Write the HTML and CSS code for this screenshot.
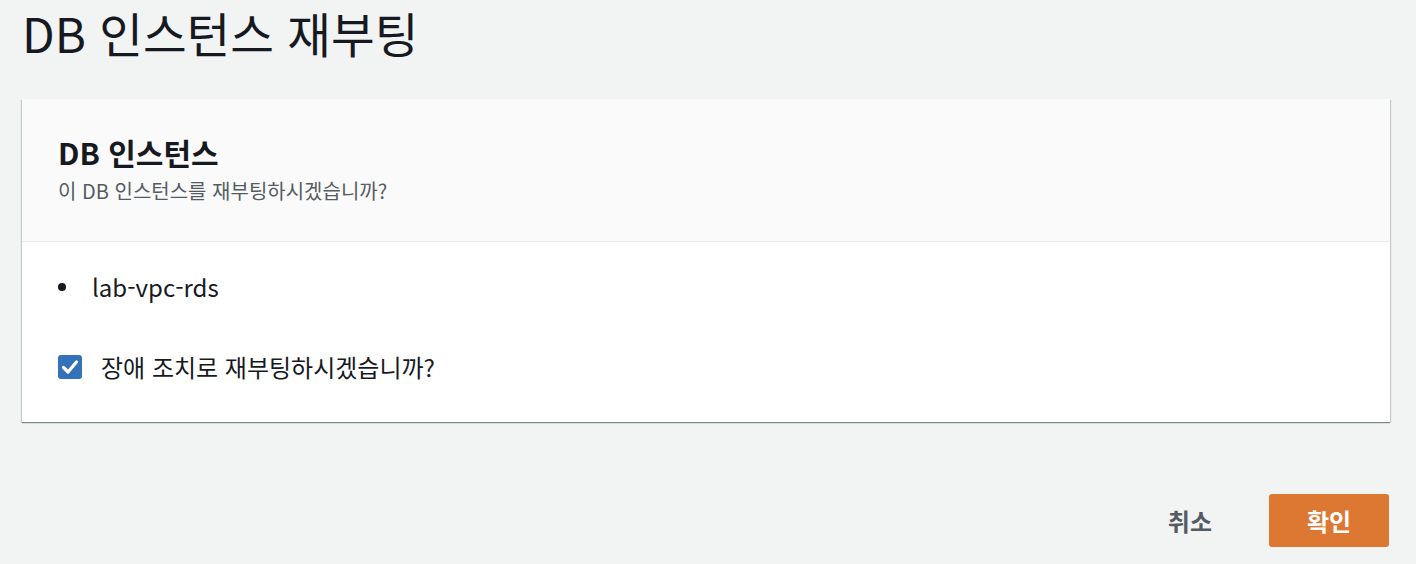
FILE: index.html
```html
<!DOCTYPE html>
<html lang="ko">
<head>
<meta charset="utf-8">
<title>DB 인스턴스 재부팅</title>
<link rel="stylesheet" href="styles.css">
</head>
<body>
<div class="page">
  <h1 class="page-title">DB 인스턴스 재부팅</h1>
  <section class="card">
    <header class="card-header">
      <h2 class="card-title">DB 인스턴스</h2>
      <p class="card-desc">이 DB 인스턴스를 재부팅하시겠습니까?</p>
    </header>
    <div class="card-body">
      <ul class="instances">
        <li class="instance"><span class="dot"></span><span>lab-vpc-rds</span></li>
      </ul>
      <label class="check-row">
        <span class="checkbox">
          <svg width="24" height="24" viewBox="0 0 24 24"><path d="M5.5 12.5l4.5 4.5 8.5-10" fill="none" stroke="#fff" stroke-width="3.2" stroke-linecap="round" stroke-linejoin="round"/></svg>
        </span>
        <span class="check-label">장애 조치로 재부팅하시겠습니까?</span>
      </label>
    </div>
  </section>
  <div class="actions">
    <button class="btn btn-link">취소</button>
    <button class="btn btn-primary">확인</button>
  </div>
</div>
</body>
</html>
```
FILE: styles.css
```css
* { box-sizing: border-box; }
html, body { margin: 0; padding: 0; }
body {
  background: #f2f3f3;
  font-family: "Noto Sans CJK KR", "Noto Sans", sans-serif;
  color: #16191f;
}
.page {
  padding: 0 26px 0 22px;
}
.page-title {
  margin: 0;
  font-size: 47.5px;
  font-weight: 400;
  line-height: 66px;
  color: #16191f;
}
.card {
  margin-top: 33px;
  background: #fff;
  box-shadow: 0 1px 1px 0 rgba(0, 28, 36, 0.3), 1px 1px 1px 0 rgba(0, 28, 36, 0.15), -1px 1px 1px 0 rgba(0, 28, 36, 0.15);
}
.card-header {
  background: #fafafa;
  border-bottom: 1px solid #eaeded;
  padding: 36px 36px 38px 36px;
}
.card-title {
  margin: 0;
  font-size: 30px;
  font-weight: 700;
  line-height: 34px;
}
.card-desc {
  margin: 10px 0 0 0;
  font-size: 20px;
  line-height: 24px;
  color: #545b64;
}
.card-body {
  padding: 29px 36px 40px 36px;
}
.instances {
  list-style: none;
  margin: 0;
  padding: 0;
}
.instance {
  display: flex;
  align-items: center;
  height: 30px;
  font-size: 24px;
}
.dot {
  width: 8px;
  height: 8px;
  border-radius: 50%;
  background: #16191f;
  margin: 2px 26px 0 0;
}
.check-row {
  margin-top: 51px;
  display: flex;
  align-items: center;
  height: 30px;
  gap: 19px;
}
.checkbox {
  width: 24px;
  height: 24px;
  border-radius: 3px;
  background: #3372b8;
  display: flex;
}
.check-label {
  font-size: 24px;
  position: relative;
  top: -1px;
}
.actions {
  margin-top: 72px;
  display: flex;
  justify-content: flex-end;
  align-items: center;
  gap: 37px;
}
.btn {
  font-family: inherit;
  font-size: 24px;
  font-weight: 700;
  height: 53px;
  border: none;
  border-radius: 3px;
  cursor: pointer;
}
.btn-link {
  background: transparent;
  color: #545b64;
  padding: 0 20px;
}
.btn-primary {
  width: 120px;
  background: #dd7833;
  color: #fff;
  margin-right: 1px;
}
```
